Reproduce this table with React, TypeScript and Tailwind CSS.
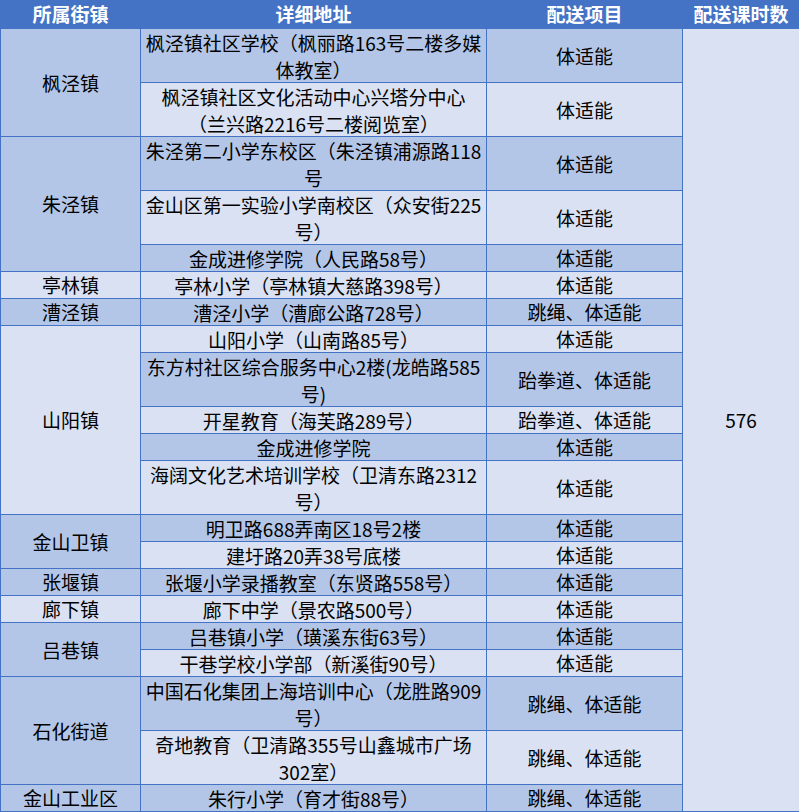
import React from 'react';

type Row = { addr: string[]; item: string };
type Town = { name: string; rows: Row[] };

const TOWNS: Town[] = [
    {
        name: '枫泾镇',
        rows: [
            { addr: ['枫泾镇社区学校（枫丽路163号二楼多媒', '体教室）'], item: '体适能' },
            { addr: ['枫泾镇社区文化活动中心兴塔分中心', '（兰兴路2216号二楼阅览室）'], item: '体适能' },
        ],
    },
    {
        name: '朱泾镇',
        rows: [
            { addr: ['朱泾第二小学东校区（朱泾镇浦源路118', '号'], item: '体适能' },
            { addr: ['金山区第一实验小学南校区（众安街225', '号）'], item: '体适能' },
            { addr: ['金成进修学院（人民路58号）'], item: '体适能' },
        ],
    },
    { name: '亭林镇', rows: [{ addr: ['亭林小学（亭林镇大慈路398号）'], item: '体适能' }] },
    { name: '漕泾镇', rows: [{ addr: ['漕泾小学（漕廊公路728号）'], item: '跳绳、体适能' }] },
    {
        name: '山阳镇',
        rows: [
            { addr: ['山阳小学（山南路85号）'], item: '体适能' },
            { addr: ['东方村社区综合服务中心2楼(龙皓路585', '号)'], item: '跆拳道、体适能' },
            { addr: ['开星教育（海芙路289号）'], item: '跆拳道、体适能' },
            { addr: ['金成进修学院'], item: '体适能' },
            { addr: ['海阔文化艺术培训学校（卫清东路2312', '号）'], item: '体适能' },
        ],
    },
    {
        name: '金山卫镇',
        rows: [
            { addr: ['明卫路688弄南区18号2楼'], item: '体适能' },
            { addr: ['建圩路20弄38号底楼'], item: '体适能' },
        ],
    },
    { name: '张堰镇', rows: [{ addr: ['张堰小学录播教室（东贤路558号）'], item: '体适能' }] },
    { name: '廊下镇', rows: [{ addr: ['廊下中学（景农路500号）'], item: '体适能' }] },
    {
        name: '吕巷镇',
        rows: [
            { addr: ['吕巷镇小学（璜溪东街63号）'], item: '体适能' },
            { addr: ['干巷学校小学部（新溪街90号）'], item: '体适能' },
        ],
    },
    {
        name: '石化街道',
        rows: [
            { addr: ['中国石化集团上海培训中心（龙胜路909', '号）'], item: '跳绳、体适能' },
            { addr: ['奇地教育（卫清路355号山鑫城市广场', '302室）'], item: '跳绳、体适能' },
        ],
    },
    { name: '金山工业区', rows: [{ addr: ['朱行小学（育才街88号）'], item: '跳绳、体适能' }] },
];

const SPAN: Record<number, string> = {
    1: 'row-span-1',
    2: 'row-span-2',
    3: 'row-span-3',
    5: 'row-span-5',
};

const band = (i: number) => (i % 2 === 0 ? 'bg-[#b4c6e7]' : 'bg-[#d9e1f2]');

export default function App() {
    const cells: React.ReactNode[] = [];
    let idx = 0;

    TOWNS.forEach((town) => {
        town.rows.forEach((row, j) => {
            const bg = band(idx);
            const h = row.addr.length > 1 ? 'h-[53px]' : 'h-[26px]';
            if (j === 0) {
                cells.push(
                    <div key={`t${idx}`} className={`${SPAN[town.rows.length]} ${bg} flex items-center justify-center`}>
                        {town.name}
                    </div>
                );
            }
            cells.push(
                <div key={`a${idx}`} className={`${bg} ${h} flex flex-col items-center justify-center leading-[27px] whitespace-nowrap`}>
                    {row.addr.map((line) => (
                        <span key={line}>{line}</span>
                    ))}
                </div>
            );
            cells.push(
                <div key={`p${idx}`} className={`${bg} ${h} flex items-center justify-center whitespace-nowrap`}>
                    {row.item}
                </div>
            );
            if (idx === 0) {
                cells.push(
                    <div key="hours" className="row-span-21 bg-[#d9e1f2] flex items-center justify-center">
                        576
                    </div>
                );
            }
            idx++;
        });
    });

    return (
        <div className="w-[799px] h-[812px] overflow-hidden bg-white font-['Noto_Sans_CJK_SC','Noto_Sans',sans-serif] text-[19px] text-black">
            <div className="grid grid-cols-[139px_345px_195px_116px] gap-px bg-[#4472c4] pl-px pb-px leading-[26px]">
                {['所属街镇', '详细地址', '配送项目', '配送课时数'].map((h) => (
                    <div key={h} className="h-[28px] flex items-center justify-center bg-[#4472c4] text-white font-bold">
                        {h}
                    </div>
                ))}
                {cells}
            </div>
        </div>
    );
}
